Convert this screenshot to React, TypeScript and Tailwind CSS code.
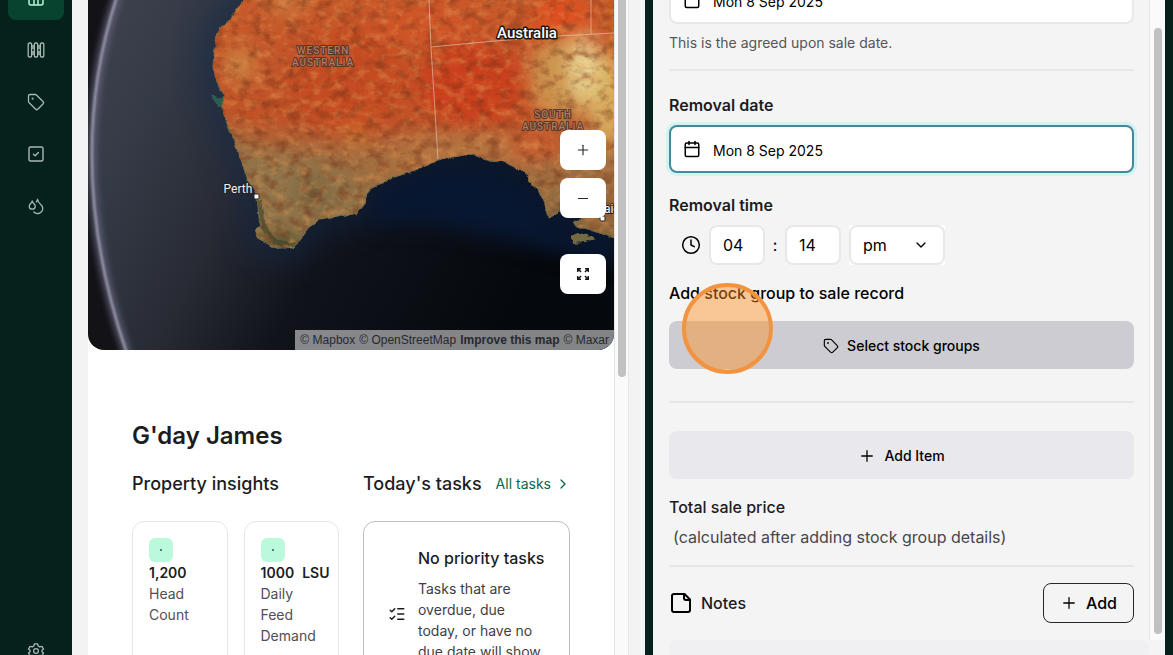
import { ReactNode, useState } from "react";
import { Calendar, ChevronDown, ChevronRight, Clock, Droplets, ListChecks, Plus, Tag } from "lucide-react";

function TableIcon() {
  return (
    <svg width="18" height="18" viewBox="0 0 18 18" fill="none" stroke="currentColor" strokeWidth="1.5">
      <rect x="2" y="2" width="14" height="14" rx="2" />
      <path d="M2 7h14M7 7v9M11 7v9" />
    </svg>
  );
}

function FenceIcon() {
  return (
    <svg width="18" height="18" viewBox="0 0 18 18" fill="none" stroke="currentColor" strokeWidth="1.3">
      <rect x="1.2" y="2" width="3.4" height="14" rx="1.2" />
      <rect x="7.3" y="2" width="3.4" height="14" rx="1.2" />
      <rect x="13.4" y="2" width="3.4" height="14" rx="1.2" />
      <path d="M4.6 5h2.7M10.7 5h2.7M4.6 7h2.7M10.7 7h2.7M4.6 11h2.7M10.7 11h2.7M4.6 13h2.7M10.7 13h2.7" />
    </svg>
  );
}

function TaskIcon() {
  return (
    <svg width="18" height="18" viewBox="0 0 18 18" fill="none" stroke="currentColor" strokeWidth="1.4" strokeLinecap="round" strokeLinejoin="round">
      <rect x="2" y="2" width="14" height="14" rx="1.5" />
      <path d="M6.5 9.2l1.7 1.6 3.2-3.2" />
    </svg>
  );
}

function CogIcon() {
  return (
    <svg width="18" height="18" viewBox="0 0 18 18" fill="none" stroke="currentColor" strokeWidth="1.3" strokeLinejoin="round">
      <path d="M7.4 1.8h3.2l.6 2.2 1.5.9 2.2-.6 1.6 2.8L15 8.2v1.7l1.5 1.2-1.6 2.8-2.2-.6-1.5.9-.6 2.2H7.4l-.6-2.2-1.5-.9-2.2.6-1.6-2.8L3 9.9V8.2L1.5 7.1l1.6-2.8 2.2.6L6.8 4z" />
      <circle cx="9" cy="9" r="2.4" />
    </svg>
  );
}

function FullscreenIcon() {
  return (
    <svg width="14" height="14" viewBox="0 0 14 14" fill="none" stroke="#18181b" strokeWidth="1.4">
      <path d="M1.7 5V1.7H5M1.7 1.7l3.4 3.4M9 1.7h3.3V5M12.3 1.7L8.9 5.1M1.7 9v3.3H5M1.7 12.3l3.4-3.4M9 12.3h3.3V9M12.3 12.3L8.9 8.9" />
    </svg>
  );
}

function NoteIcon() {
  return (
    <svg width="24" height="24" viewBox="0 0 24 24" fill="none" stroke="#000" strokeWidth="2" strokeLinejoin="round">
      <path d="M15.5 3H5a2 2 0 0 0-2 2v14a2 2 0 0 0 2 2h14a2 2 0 0 0 2-2V8.5z" />
      <path d="M15 3v4a2 2 0 0 0 2 2h4" />
    </svg>
  );
}

const LAND =
  "M158 -4L149 9L141 21L133 27L129 33L127 48L125 66L126 76L131 86L136 95L133 106L138 121L145 138L152 158L160 180L168 192L170 207L172 226L167 230L169 238L178 242L190 248L205 248L213 240L220 228L232 219L250 216L268 214L276 204L279 195L286 187L304 178L322 172L340 165L350 159L372 156L386 153L398 160L414 161L428 168L440 173L441 182L450 190L456 203L461 217L470 212L476 203L486 205L494 218L490 227L500 229L512 232L522 236L532 240L532 -4Z";

const HORIZON = "M29 -4C-5 100 -7 220 39 354";

function SatelliteMap() {
  return (
    <svg className="block h-full w-full" viewBox="0 0 526 350" preserveAspectRatio="xMinYMin slice" role="img" aria-label="Satellite map of Australia">
      <defs>
        <linearGradient id="sea" x1="0" y1="0" x2="1" y2="0.35">
          <stop offset="0" stopColor="#40434f" />
          <stop offset="0.2" stopColor="#343a46" />
          <stop offset="0.42" stopColor="#282b34" />
          <stop offset="0.62" stopColor="#10131a" />
          <stop offset="1" stopColor="#05080d" />
        </linearGradient>
        <linearGradient id="soil" x1="0" y1="0" x2="0" y2="1">
          <stop offset="0" stopColor="#c85a2c" />
          <stop offset="0.48" stopColor="#c15228" />
          <stop offset="0.64" stopColor="#a46d40" />
          <stop offset="1" stopColor="#7d6a43" />
        </linearGradient>
        <filter id="soft" filterUnits="userSpaceOnUse" x="-60" y="-60" width="660" height="480" colorInterpolationFilters="sRGB">
          <feGaussianBlur stdDeviation="10" />
        </filter>
        <filter id="haze" filterUnits="userSpaceOnUse" x="-60" y="-60" width="660" height="480" colorInterpolationFilters="sRGB">
          <feGaussianBlur stdDeviation="16" />
        </filter>
        <filter id="glow" filterUnits="userSpaceOnUse" x="-60" y="-60" width="200" height="480" colorInterpolationFilters="sRGB">
          <feGaussianBlur stdDeviation="3" />
        </filter>
        <filter id="rim" filterUnits="userSpaceOnUse" x="-60" y="-60" width="200" height="480" colorInterpolationFilters="sRGB">
          <feGaussianBlur stdDeviation="1" />
        </filter>
        <filter id="light" x="0" y="0" width="100%" height="100%" colorInterpolationFilters="sRGB">
          <feTurbulence type="fractalNoise" baseFrequency="0.09 0.12" numOctaves="5" seed="8" />
          <feColorMatrix values="0 0 0 0 0.87  0 0 0 0 0.58  0 0 0 0 0.32  2.6 0 0 0 -1.2" />
        </filter>
        <filter id="dark" x="0" y="0" width="100%" height="100%" colorInterpolationFilters="sRGB">
          <feTurbulence type="fractalNoise" baseFrequency="0.08 0.1" numOctaves="5" seed="21" />
          <feColorMatrix values="0 0 0 0 0.45  0 0 0 0 0.19  0 0 0 0 0.09  0 2.6 0 0 -1.2" />
        </filter>
        <filter id="rough" x="-5%" y="-5%" width="110%" height="110%">
          <feTurbulence type="fractalNoise" baseFrequency="0.14" numOctaves="3" seed="4" />
          <feDisplacementMap in="SourceGraphic" scale="5" xChannelSelector="R" yChannelSelector="G" />
        </filter>
        <clipPath id="land">
          <path d={LAND} />
        </clipPath>
        <clipPath id="globe">
          <path d={HORIZON + "H530V-4Z"} />
        </clipPath>
      </defs>
      <rect width="526" height="350" fill="#121217" />
      <g clipPath="url(#globe)">
        <rect width="526" height="350" fill="url(#sea)" />
        <path d={LAND} fill="none" stroke="#15284a" strokeWidth="20" opacity="0.8" filter="url(#haze)" />
        <path d="M290 190L345 168L400 165L440 185L470 225L526 240V265L440 245L340 225L280 225Z" fill="#081731" filter="url(#soft)" />
      </g>
      <path d={HORIZON} fill="none" stroke="#6a6880" strokeWidth="9" opacity="0.75" filter="url(#glow)" />
      <path d={HORIZON} fill="none" stroke="#aaa8bd" strokeWidth="2" filter="url(#rim)" />
      <g filter="url(#rough)">
        <path d={LAND} fill="url(#soil)" stroke="#6e6846" strokeWidth="1" />
        <path d="M485 222l9-3 8 3-3 6-10 1z" fill="#7d6a43" />
        <path d="M482 236l9-3 12 3 4 3-10 3-12 1z" fill="#756a43" />
        <path d="M124 94l7 4 4-2 1 8-5 3-5-6z" fill="#2d5c53" />
      </g>
      <g clipPath="url(#land)">
        <g filter="url(#soft)">
          <path d="M130 110L160 150L230 160L275 180L280 210L200 255L160 245L150 170Z" fill="#8f744a" />
          <path d="M285 172L335 138L400 132L450 165L390 160Z" fill="#b57541" />
          <ellipse cx="152" cy="65" rx="14" ry="18" fill="#cd8a47" />
          <ellipse cx="262" cy="80" rx="60" ry="52" fill="#c54c22" />
          <ellipse cx="385" cy="85" rx="55" ry="40" fill="#cb401d" />
          <ellipse cx="340" cy="25" rx="60" ry="22" fill="#cf5528" />
          <ellipse cx="472" cy="15" rx="28" ry="20" fill="#e24e20" />
          <ellipse cx="478" cy="78" rx="38" ry="42" fill="#cb9650" />
          <ellipse cx="496" cy="68" rx="13" ry="34" fill="#f0e2a4" />
          <ellipse cx="520" cy="100" rx="18" ry="50" fill="#d8b566" />
          <ellipse cx="450" cy="145" rx="30" ry="14" fill="#cb5a2c" />
          <ellipse cx="510" cy="205" rx="22" ry="28" fill="#9c683b" />
          <ellipse cx="225" cy="195" rx="12" ry="12" fill="#5f5133" />
          <ellipse cx="192" cy="243" rx="24" ry="8" fill="#454a29" />
          <ellipse cx="197" cy="3" rx="24" ry="8" fill="#cc8545" />
          <ellipse cx="268" cy="135" rx="7" ry="7" fill="#e2a83c" />
        </g>
        <rect width="526" height="260" filter="url(#light)" opacity="0.5" />
        <rect width="526" height="260" filter="url(#dark)" opacity="0.5" />
        <path d="M171 200l4 25 12 17 22 3" fill="none" stroke="#3e4529" strokeWidth="4" filter="url(#rough)" opacity="0.6" />
        <path d="M341 0L343 47L350 160M343 47L407 41L470 36L526 33M503 0V34" fill="none" stroke="#e6d0c0" strokeOpacity="0.6" />
      </g>
      <g fontFamily="Roboto, sans-serif" paintOrder="stroke" strokeLinejoin="round" textAnchor="middle">
        <text x="439" y="38" fontSize="15" fontWeight="500" fill="#fff" stroke="#1b1614" strokeWidth="3">Australia</text>
        <g fontSize="10" fontWeight="500" letterSpacing="1" fill="#b37a5d" stroke="#54352b" strokeWidth="2">
          <text x="235" y="54">WESTERN</text>
          <text x="235" y="66">AUSTRALIA</text>
          <text x="465" y="118">SOUTH</text>
          <text x="465" y="130">AUSTRALIA</text>
        </g>
        <text x="150" y="193" fontSize="12" fill="#f1f1f1" stroke="#222" strokeWidth="2">Perth</text>
        <text x="492" y="213" fontSize="12" fill="#fff" stroke="#222" strokeWidth="2" textAnchor="start">Adelaide</text>
      </g>
      <rect x="166" y="194" width="5" height="5" rx="1" fill="#fff" stroke="#222" />
      <rect x="512" y="216" width="5" height="5" rx="1" fill="#fff" stroke="#222" />
    </svg>
  );
}

function NavButton({ label, active, children }: { label: string; active?: boolean; children: ReactNode }) {
  return (
    <button
      aria-label={label}
      className={`flex h-11 w-14 shrink-0 items-center justify-center rounded-lg ${
        active ? "bg-[#08432f] text-[#b8f5d6]" : "text-[#a9b8b3]"
      }`}
    >
      {children}
    </button>
  );
}

function Sidebar() {
  return (
    <nav className="-mt-6 flex w-[72px] shrink-0 flex-col items-center gap-2">
      <NavButton label="Dashboard" active><TableIcon /></NavButton>
      <NavButton label="Paddocks"><FenceIcon /></NavButton>
      <NavButton label="Stock"><Tag size={18} strokeWidth={1.7} /></NavButton>
      <NavButton label="Tasks"><TaskIcon /></NavButton>
      <NavButton label="Water"><Droplets size={18} strokeWidth={1.7} /></NavButton>
      <div className="-mb-[18px] mt-auto">
        <NavButton label="Settings"><CogIcon /></NavButton>
      </div>
    </nav>
  );
}

function MapButton({ label, children }: { label: string; children: ReactNode }) {
  return (
    <button aria-label={label} className="flex h-10 w-[46px] items-center justify-center rounded-lg bg-white text-zinc-800">
      {children}
    </button>
  );
}

function InsightCard({ value, unit, label }: { value: string; unit?: string; label: string }) {
  return (
    <div className="min-w-0 rounded-xl border border-[#e6e6e8] p-4 text-sm leading-[21px]">
      <div className="flex size-6 items-center justify-center rounded-md bg-[#bbf9dc]">
        <span className="size-0.5 rounded-full bg-[#245c47]" />
      </div>
      <div className="flex gap-2 font-semibold whitespace-nowrap text-[#1c1c1f]">
        <span>{value}</span>
        {unit && <span>{unit}</span>}
      </div>
      <div className="w-14 text-[#4f4f54]">{label}</div>
    </div>
  );
}

function Dashboard() {
  return (
    <main className="min-w-0 flex-1 overflow-hidden border-r border-[#e4e4e4] bg-white">
      <div className="relative h-[350px] overflow-hidden rounded-b-2xl">
        <SatelliteMap />
        <div className="absolute top-[130px] right-2 flex flex-col gap-2">
          <MapButton label="Zoom in"><Plus size={16} strokeWidth={1.7} /></MapButton>
          <MapButton label="Zoom out"><span className="h-px w-2.5 bg-zinc-800" /></MapButton>
          <div className="mt-7">
            <MapButton label="Fullscreen"><FullscreenIcon /></MapButton>
          </div>
        </div>
        <div className="absolute right-0 bottom-0 flex h-5 items-center gap-1 bg-white/50 px-[5px] font-['Liberation_Sans',Arial,sans-serif] text-xs whitespace-nowrap text-[#27292e]">
          <a href="#mapbox">© Mapbox</a>
          <a href="#osm">© OpenStreetMap</a>
          <a href="#improve" className="font-bold">Improve this map</a>
          <a href="#maxar">© Maxar</a>
        </div>
      </div>

      <div className="px-11 pt-[70px] text-[#1c1c1f]">
        <h1 className="text-2xl leading-8 font-semibold">G'day James</h1>
        <div className="mt-5 grid grid-cols-2 gap-6">
          <section>
            <h2 className="text-lg leading-6 font-medium whitespace-nowrap">Property insights</h2>
            <div className="mt-[25px] grid h-[186px] grid-cols-2 gap-4">
              <InsightCard value="1,200" label="Head Count" />
              <InsightCard value="1000" unit="LSU" label="Daily Feed Demand" />
            </div>
          </section>
          <section>
            <div className="flex items-center gap-3.5 whitespace-nowrap">
              <h2 className="text-lg leading-6 font-medium">Today's tasks</h2>
              <a href="#tasks" className="flex items-center gap-1 text-sm text-[#0b6b4b]">
                All tasks <ChevronRight size={16} />
              </a>
            </div>
            <div className="mt-[25px] flex h-[186px] items-center gap-3 rounded-xl border border-[#bdbdc1] px-6">
              <ListChecks size={18} className="shrink-0" />
              <div className="shrink-0">
                <h3 className="leading-6 font-medium whitespace-nowrap">No priority tasks</h3>
                <p className="mt-2 w-32 text-sm leading-[21px] text-[#3f3f45]">
                  Tasks that are overdue, due today, or have no due date will show here.
                </p>
              </div>
            </div>
          </section>
        </div>
      </div>
    </main>
  );
}

function DateField({ id, label, focused }: { id: string; label?: string; focused?: boolean }) {
  const [value, setValue] = useState("Mon 8 Sep 2025");
  return (
    <div
      className={`flex h-12 items-center gap-3 rounded-lg border-2 bg-white px-3 ${
        focused ? "border-[#43899a] ring-3 ring-[#d3f3f2]" : "border-[#e8e8eb]"
      }`}
    >
      <Calendar size={18} className="shrink-0 text-black" />
      <input
        id={id}
        aria-label={label}
        value={value}
        onChange={(e) => setValue(e.target.value)}
        className="h-full min-w-0 flex-1 bg-transparent pt-0.5 text-sm text-black outline-none"
      />
    </div>
  );
}

function TimeField() {
  return (
    <div className="mt-2 flex h-10 items-center pl-3 text-base text-black">
      <Clock size={20} strokeWidth={1.8} />
      <input aria-label="Hour" defaultValue="04" className="ml-2 h-10 w-14 rounded-lg border-2 border-[#e8e8eb] bg-white px-3 outline-none" />
      <span className="w-5 text-center">:</span>
      <input aria-label="Minute" defaultValue="14" className="h-10 w-14 rounded-lg border-2 border-[#e8e8eb] bg-white px-3 outline-none" />
      <div className="relative ml-2 bg-white">
        <select aria-label="Period" defaultValue="pm" className="block h-10 w-24 appearance-none rounded-lg border-2 border-[#e8e8eb] bg-white px-3 outline-none">
          <option>am</option>
          <option>pm</option>
        </select>
        <ChevronDown size={16} className="pointer-events-none absolute top-3 right-4" />
      </div>
    </div>
  );
}

function SalePanel() {
  return (
    <aside className="flex w-[512px] shrink-0 flex-col bg-[#f4f4f4]">
      <div className="flex min-h-0 flex-1">
        <form className="-mt-6 min-w-0 flex-1 pr-[15px] pl-4" onSubmit={(e) => e.preventDefault()}>
          <DateField id="sale-date" label="Sale date" />
          <p className="mt-2 text-sm leading-[21px] text-[#55555b]">This is the agreed upon sale date.</p>
          <hr className="mt-4 border-t-2 border-[#e7e7e9]" />

          <label htmlFor="removal-date" className="mt-[22px] mb-2 block leading-6 font-semibold text-[#1c1c1f]">
            Removal date
          </label>
          <DateField id="removal-date" focused />

          <div role="group" aria-labelledby="removal-time">
            <div id="removal-time" className="mt-5 leading-6 font-semibold text-[#1c1c1f]">Removal time</div>
            <TimeField />
          </div>

          <h3 className="mt-4 leading-6 font-medium text-black">Add stock group to sale record</h3>
          <div className="relative mt-4">
            <button className="flex h-12 w-full items-center justify-center gap-2 rounded-lg bg-[#cdccd2] pt-0.5 text-sm font-medium text-black">
              <Tag size={16} strokeWidth={1.7} />
              Select stock groups
            </button>
            <span className="pointer-events-none absolute -top-[38px] left-[13px] size-[91px] rounded-full border-4 border-[#f29340] bg-[#ff8e21]/45" />
          </div>
          <hr className="mt-8 border-t-2 border-[#e5e6ea]" />

          <button className="mt-7 flex h-12 w-full items-center justify-center gap-2 rounded-lg bg-[#e9e8ed] pt-0.5 text-sm font-medium text-black">
            <Plus size={18} strokeWidth={1.7} />
            Add Item
          </button>
          <h3 className="mt-4 leading-6 font-medium text-[#1c1c1f]">Total sale price</h3>
          <p className="mt-1.5 pl-1 leading-6 text-[#46464c]">(calculated after adding stock group details)</p>
          <hr className="mt-4 border-t-2 border-[#e5e6ea]" />

          <div className="mt-4 flex items-center">
            <NoteIcon />
            <h3 className="ml-2 font-medium text-[#1c1c1f]">Notes</h3>
            <button className="ml-auto flex h-10 items-center gap-2 rounded-lg border border-[#27272a] px-4 font-medium text-black">
              <Plus size={18} strokeWidth={1.7} />
              Add
            </button>
          </div>
        </form>
        <div className="flex w-4 shrink-0 justify-center border-l border-[#e6e6e6] bg-[#fafafa] pt-7 pb-1.5">
          <div className="w-2 rounded-full bg-[#c1c1c1]" />
        </div>
      </div>
      <div className="mr-4 ml-4 h-[15px] shrink-0 rounded-t-lg bg-[#f0f0f2]" />
    </aside>
  );
}

export default function App() {
  return (
    <div className="flex h-screen overflow-hidden bg-[#05211c] font-[Inter,sans-serif]">
      <Sidebar />
      <div className="flex min-w-0 flex-1 bg-[#f4f3f4] px-4">
        <Dashboard />
        <div className="flex w-3.5 shrink-0 justify-center border-r border-[#e6e6e6] bg-[#fafafa]">
          <div className="h-[377px] w-2 rounded-b-full bg-[#c1c1c1]" />
        </div>
      </div>
      <div className="flex shrink-0 px-2">
        <SalePanel />
      </div>
    </div>
  );
}
